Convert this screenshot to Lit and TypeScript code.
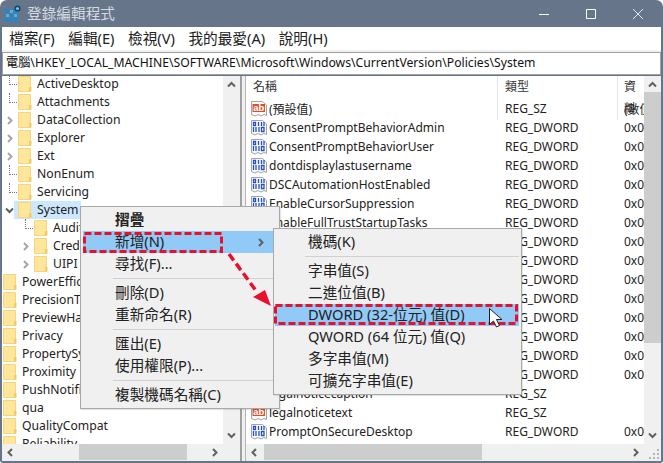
import { LitElement, html, css, svg } from "lit";
import { customElement } from "lit/decorators.js";

const treeRows: [string, number, string, boolean?][] = [
  ["ActiveDesktop", 1, "dot"], ["Attachments", 1, "dot"], ["DataCollection", 1, "more"], ["Explorer", 1, "more"],
  ["Ext", 1, "more"], ["NonEnum", 1, "dot"], ["Servicing", 1, "dot"], ["System", 1, "open", true],
  ["Audit", 2, "dot"], ["Credentials", 2, "more"], ["UIPI", 2, "more"],
  ["PowerEfficiency", 0, ""], ["PrecisionTouch", 0, ""], ["PreviewHandlers", 0, ""], ["Privacy", 0, ""],
  ["PropertySystem", 0, ""], ["Proximity", 0, ""], ["PushNotifications", 0, ""], ["qua", 0, ""],
  ["QualityCompat", 0, ""], ["Reliability", 0, ""],
];
const D = "REG_DWORD";
const listRows: [string, string, string, string][] = [
  ["ab", "(預設值)", "REG_SZ", "(數值未設定)"],
  ["01", "ConsentPromptBehaviorAdmin", D, "0x00000005"],
  ["01", "ConsentPromptBehaviorUser", D, "0x00000003"],
  ["01", "dontdisplaylastusername", D, "0x00000000"],
  ["01", "DSCAutomationHostEnabled", D, "0x00000002"],
  ["01", "EnableCursorSuppression", D, "0x00000001"],
  ["01", "EnableFullTrustStartupTasks", D, "0x00000002"],
  ["01", "EnableInstallerDetection", D, "0x00000001"],
  ["01", "EnableLUA", D, "0x00000001"],
  ["01", "EnableSecureUIAPaths", D, "0x00000001"],
  ["01", "EnableUIADesktopToggle", D, "0x00000000"],
  ["01", "EnableUwpStartupTasks", D, "0x00000002"],
  ["01", "EnableVirtualization", D, "0x00000001"],
  ["01", "FilterAdministratorToken", D, "0x00000000"],
  ["01", "SupportUwpStartupTasks", D, "0x00000001"],
  ["ab", "legalnoticecaption", "REG_SZ", ""],
  ["ab", "legalnoticetext", "REG_SZ", ""],
  ["01", "PromptOnSecureDesktop", D, "0x00000001"],
];

const page = "M.5 .5h11l4 3.5v10.5l-2.5-1-3 1.5-3-1.5-3 1.5-3.5-1.5z";
const folder = svg`<svg class="ico" width="14" height="16" viewBox="0 0 14 16"><path d="M.5 .5h12v15H.5z" fill="#ffe69a" stroke="#f3d67e"/><path d="M11 11h2.5v4.5H11z" fill="#f2cb64"/></svg>`;
const abIcon = svg`<svg class="ico" width="16" height="16" viewBox="0 0 16 16"><path d="${page}" fill="#fafafa" stroke="#a4a4a4"/><path d="M1.5 3h12.5v8H1.5z" fill="#d9512c"/><text x="2.2" y="10" font-family="Liberation Sans" font-size="9.5" font-weight="700" fill="#fff">ab</text></svg>`;
const binIcon = svg`<svg class="ico" width="16" height="16" viewBox="0 0 16 16"><path d="${page}" fill="#fafafa" stroke="#a4a4a4"/><path d="M2.5 2.5h2v3h-2zM10.5 2v4M13 2v4M7.5 2v4M2.5 7v5M5 7v5M10.5 7.5h2.5v4h-2.5zM8 7v5" fill="none" stroke="#2450c6" stroke-width="1.3"/></svg>`;
const chev = (d: string, gray = false) => svg`<svg class="ico" width="9" height="9" viewBox="0 0 9 9"><path d="${d}" fill="none" stroke="${gray ? "#a6a6a6" : "#606060"}" stroke-width="2"/></svg>`;
const UP = "M1 6.5l3.5-3.5 3.5 3.5";
const DOWN = "M1 2.5l3.5 3.5 3.5-3.5";
const LEFT = "M6 1L2.5 4.5 6 8";
const RIGHT = "M3 1l3.5 3.5L3 8";

@customElement("app-root")
export class AppRoot extends LitElement {
  static styles = css`
    :host { display: block; width: 663px; height: 463px; font-family: "Noto Sans", "Noto Sans CJK TC", sans-serif; font-size: 12px; color: #111; background: #fff; }
    .win { position: relative; width: 663px; height: 463px; display: flex; flex-direction: column; background: #66758a; border-radius: 7px 7px 3px 3px; overflow: hidden; box-sizing: border-box; padding: 0 2px 2px 2px; }
    .ico { display: block; flex: none; }
    .title { height: 27px; display: flex; align-items: center; margin-left: -2px; color: #d5dae1; font-size: 14.67px; flex: none; }
    .title-text { padding-bottom: 2px; }
    .logo { margin: 1px 6px 0 5px; }
    .spacer { flex: 1; }
    .wbtn { width: 47px; height: 27px; display: flex; align-items: center; justify-content: center; }
    .menu { height: 23px; box-sizing: border-box; padding-bottom: 2px; background: #fff; display: flex; align-items: center; padding-left: 7px; gap: 13.5px; font-size: 14.67px; flex: none; color: #222; }
    .gap { height: 2px; background: #f0f0f0; flex: none; }
    .addr { height: 21px; background: #fff; border: 1px solid #a0a0a0; margin: 0 0 1px 0; box-sizing: content-box; padding-left: 3px; font-size: 12.2px; line-height: 20px; white-space: nowrap; overflow: hidden; flex: none; }
    .split { flex: 1; min-height: 0; display: flex; background: #f0f0f0; gap: 3px; }
    .pane { position: relative; display: grid; grid-template-rows: 1fr 16px; background: #fff; min-width: 0; overflow: hidden; box-sizing: border-box; padding-bottom: 1px; }
    .tree { width: 240px; grid-template-columns: 1fr 17px; border-right: 2px solid #a0a0a0; background: #f0f0f0; }
    .list { flex: 1; grid-template-columns: 1fr 17px; border-left: 1px solid #b4b4b4; background: #f0f0f0; }
    .tree-body { overflow: hidden; margin-top: -1px; background: #fff; }
    .row { height: 18px; display: flex; align-items: center; white-space: nowrap; position: relative; }
    .lv0 { padding-left: 1px; } .lv1 { padding-left: 16px; } .lv2 { padding-left: 32px; }
    .name { margin-left: 5px; font-size: 12.2px; color: #222; padding-right: 5px; padding-bottom: 2px; }
    .sel { background: #cce8ff; width: 67px; height: 18px; display: flex; align-items: center; margin-left: -4px; padding-left: 4px; box-sizing: border-box; overflow: hidden; }
    .dot { position: absolute; left: 7px; top: 0; height: 9px; width: 7px; border-left: 1px dotted #777; border-bottom: 1px dotted #777; }
    .dot2 { position: absolute; left: 23px; top: 0; height: 9px; width: 7px; border-left: 1px dotted #777; border-bottom: 1px dotted #777; }
    .exp { position: absolute; left: 3px; top: 5px; }
    .exp2 { position: absolute; left: 19px; top: 5px; }
    .sv { background: #f0f0f0; display: flex; flex-direction: column; align-items: center; justify-content: space-between; position: relative; padding: 4px 0; box-sizing: border-box; }
    .sh { background: #f0f0f0; display: flex; align-items: center; justify-content: space-between; padding: 0 4px; position: relative; }
    .corner { background: #f0f0f0; position: relative; }
    .grip { position: absolute; right: 1px; bottom: 1px; }
    .tbh { position: absolute; background: #cdcdcd; top: 0; bottom: 0; }
    .tbv { position: absolute; background: #cdcdcd; left: 0; right: 0; top: 16px; height: 251px; }
    .list-body { overflow: hidden; position: relative; background: #fff; }
    .head { height: 23px; display: grid; grid-template-columns: 252px 120px 1fr; font-size: 12px; color: #333; }
    .head span { padding-left: 7px; border-right: 1px solid #e5e5e5; line-height: 22px; }
    .head span:last-child { padding-left: 6px; border-right: 0; }
    .lrow { height: 19px; display: grid; grid-template-columns: 252px 120px 1fr; align-items: center; white-space: nowrap; font-size: 12px; color: #222; }
    .lname { display: flex; align-items: center; gap: 2px; padding-left: 5px; }
    .ltype { padding-left: 7px; }
    .ldata { padding-left: 6px; overflow: hidden; }
    .cm { position: absolute; background: #f0f0f0; border: 1px solid #a9a9a9; box-sizing: border-box; padding: 2px; font-size: 14.67px; color: #222; box-shadow: 1px 1px 1px rgba(0,0,0,.1); }
    .cm1 { left: 80px; top: 206px; width: 200px; height: 203px; }
    .cm2 { left: 273px; top: 228px; width: 249px; height: 167px; padding-left: 1px; }
    .mi { height: 22px; box-sizing: border-box; padding-bottom: 4px; display: flex; align-items: center; padding-left: 32px; position: relative; white-space: nowrap; }
    .mi.hl { background: #91c9f7; }
    .mi.b { font-weight: 700; }
    .sub { position: absolute; right: 12px; top: 7px; }
    .sep { height: 1px; background: #d0d0d0; margin: 3px 0 3px 30px; }
    .cm2 .mi { padding-left: 33px; }
    .over { position: absolute; left: 0; top: 0; pointer-events: none; }
  `;

  private treeRow(r: [string, number, string, boolean?]) {
    const [n, lv, kind, sel] = r;
    const offs = lv === 2 ? ["dot2", "exp2"] : ["dot", "exp"];
    return html`<div class="row lv${lv}">
      ${kind === "dot" ? html`<span class=${offs[0]}></span>` : ""}
      ${kind === "more" ? html`<span class=${offs[1]}>${chev(RIGHT, true)}</span>` : ""}
      ${kind === "open" ? html`<span class=${offs[1]}>${chev(DOWN)}</span>` : ""}
      ${sel
        ? html`<div class="sel">${folder}<span class="name">${n}</span></div>`
        : html`${folder}<span class="name">${n}</span>`}
    </div>`;
  }

  render() {
    return html`<div class="win">
      <div class="title">
        <svg class="ico logo" width="16" height="18" viewBox="0 0 16 18">
          <path d="M0 4h13v13H0z" fill="#1e88cf"/>
          <path d="M4.5 4v13M8.5 4v13M0 8.5h13M0 12.5h13" stroke="#66758a" stroke-width="1"/>
          <path d="M5 5h3v3H5zM1 9h3v3H1zM9 9h3v3H9z" fill="#49b6ea"/>
          <circle cx="12.5" cy="3.5" r="3" fill="#173f66"/>
          <circle cx="12.5" cy="3.5" r="1.6" fill="#5fd0f5"/>
        </svg>
        <span class="title-text">登錄編輯程式</span>
        <span class="spacer"></span>
        <div class="wbtn"><svg width="12" height="12" viewBox="0 0 12 12"><path d="M1 6.5h10" stroke="#fff"/></svg></div>
        <div class="wbtn"><svg width="12" height="12" viewBox="0 0 12 12"><path d="M1.5 1.5h9v9h-9z" fill="none" stroke="#fff"/></svg></div>
        <div class="wbtn"><svg width="12" height="12" viewBox="0 0 12 12"><path d="M1 1l10 10M11 1L1 11" stroke="#e6e9ed"/></svg></div>
      </div>
      <div class="menu"><span>檔案(F)</span><span>編輯(E)</span><span>檢視(V)</span><span>我的最愛(A)</span><span>說明(H)</span></div>
      <div class="gap"></div>
      <div class="addr">電腦\\HKEY_LOCAL_MACHINE\\SOFTWARE\\Microsoft\\Windows\\CurrentVersion\\Policies\\System</div>
      <div class="split">
        <div class="pane tree">
          <div class="tree-body">${treeRows.map((r) => this.treeRow(r))}</div>
          <div class="sv">${chev(UP)}${chev(DOWN)}</div>
          <div class="sh">${chev(LEFT)}<div class="tbh" style="left:77px;width:108px"></div>${chev(RIGHT)}</div>
          <div class="corner"></div>
        </div>
        <div class="pane list">
          <div class="list-body">
            <div class="head"><span>名稱</span><span>類型</span><span>資料</span></div>
            ${listRows.map((r) => html`<div class="lrow">
              <div class="lname">${r[0] === "ab" ? abIcon : binIcon}<span>${r[1]}</span></div>
              <div class="ltype">${r[2]}</div><div class="ldata">${r[3]}</div>
            </div>`)}
          </div>
          <div class="sv">${chev(UP)}<div class="tbv"></div>${chev(DOWN)}</div>
          <div class="sh">${chev(LEFT)}<div class="tbh" style="left:18px;width:218px"></div>${chev(RIGHT)}</div>
          <div class="corner">
            <svg class="grip" width="11" height="11" viewBox="0 0 11 11"><path d="M8 1h2v2H8zM4 5h2v2H4zM8 5h2v2H8zM0 9h2v2H0zM4 9h2v2H4zM8 9h2v2H8z" fill="#b5b5b5"/></svg>
          </div>
        </div>
      </div>
      <div class="cm cm1">
        <div class="mi b">摺疊</div>
        <div class="mi hl">新增(N)<span class="sub">${chev(RIGHT)}</span></div>
        <div class="mi">尋找(F)...</div>
        <div class="sep"></div>
        <div class="mi">刪除(D)</div>
        <div class="mi">重新命名(R)</div>
        <div class="sep"></div>
        <div class="mi">匯出(E)</div>
        <div class="mi">使用權限(P)...</div>
        <div class="sep"></div>
        <div class="mi">複製機碼名稱(C)</div>
      </div>
      <div class="cm cm2">
        <div class="mi">機碼(K)</div>
        <div class="sep"></div>
        <div class="mi">字串值(S)</div>
        <div class="mi">二進位值(B)</div>
        <div class="mi hl">DWORD (32-位元) 值(D)</div>
        <div class="mi">QWORD (64 位元) 值(Q)</div>
        <div class="mi">多字串值(M)</div>
        <div class="mi">可擴充字串值(E)</div>
      </div>
      <svg class="over" width="663" height="463" viewBox="0 0 663 463">
        <g fill="none" stroke="#e8112d" stroke-width="3" stroke-dasharray="7 3">
          <path d="M84.5 233.5H221.5V251.5H84.5z"/>
          <path d="M275.5 305.5H516.5V323.5H275.5z"/>
          <path d="M229 254L257 292" stroke-width="3.5" stroke-dasharray="8 4"/>
        </g>
        <path d="M253 297L265 290L271 306z" fill="#e8112d"/>
        <path d="M489.5 308.5v16l4-3.5 3 6 3-1.5-3-6h5.5z" fill="#fff" stroke="#222" stroke-width="1"/>
      </svg>
    </div>`;
  }
}
